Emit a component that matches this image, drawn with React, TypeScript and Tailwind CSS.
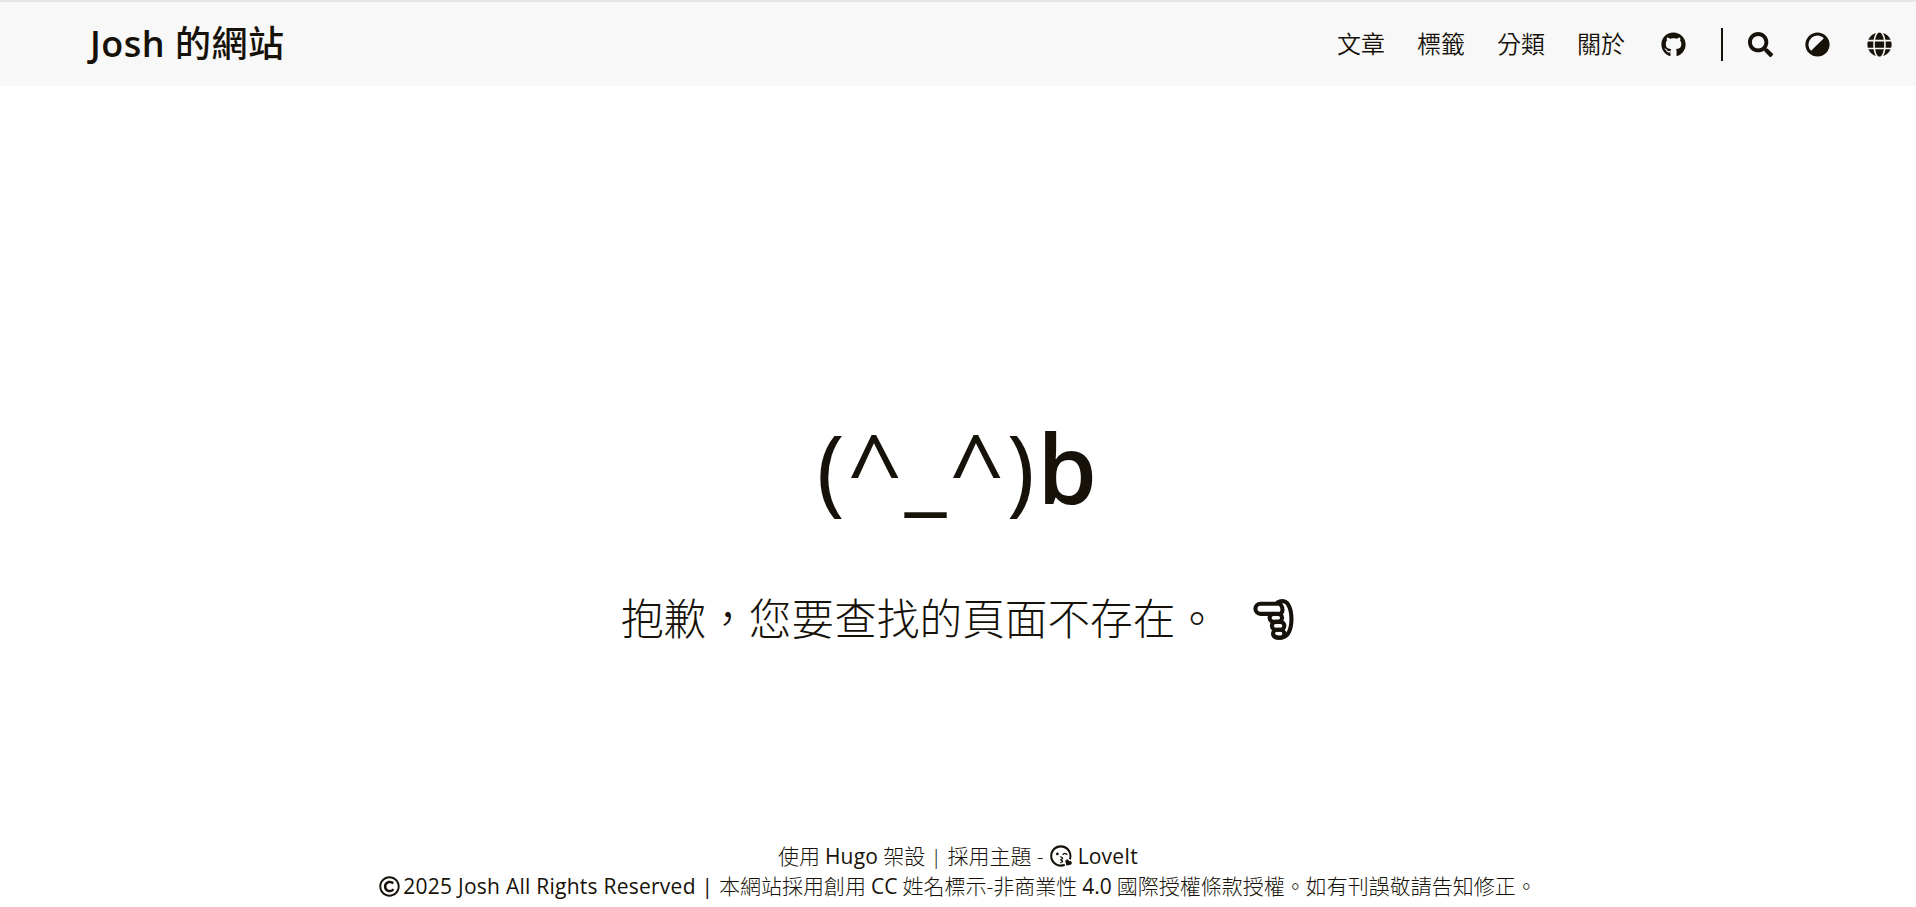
import { FaAdjust, FaGithub, FaGlobe, FaRegCopyright, FaRegKissWinkHeart, FaSearch } from "react-icons/fa";

const navItems = ["文章", "標籤", "分類", "關於"];

// pointing hand from the 404 line, no package has this one
function PointingHand() {
  return (
    <svg viewBox="6 7 36 37" className="ml-[33px] h-[42px] w-[44px]" fill="none" stroke="currentColor" strokeWidth="3.6" strokeLinecap="round" strokeLinejoin="round">
      <path d="M30 12H13a4.5 4.5 0 0 0 0 9H24" />
      <path d="M28 11C31 9 36 9 38 14C41 20 41 31 38 37C36 42 30 43 26 41" />
      <path d="M30 21C33 20 33 16 31 13" />
      <rect x="21" y="21" width="11" height="7" rx="3.5" />
      <rect x="23" y="28" width="11" height="7" rx="3.5" />
      <rect x="24" y="35" width="10" height="7" rx="3.5" />
    </svg>
  );
}

function Header() {
  return (
    <header className="flex h-[86px] shrink-0 items-center justify-between border-t-2 border-[#e5e5e5] bg-[#f8f8f8] pl-[90px] pr-6">
      <a className="text-[36px] font-medium leading-none tracking-[0.5px]">
        <span className="font-semibold">Josh</span> 的網站
      </a>
      <nav className="flex items-center text-[24px] font-[350]">
        <div className="flex gap-[32px]">
          {navItems.map((item) => (
            <a key={item}>{item}</a>
          ))}
        </div>
        <FaGithub className="ml-[36px] h-[25px] w-[25px]" />
        <span className="ml-[35px] h-[33px] w-[2px] bg-[#161209]" />
        <FaSearch className="ml-[25px] h-[25px] w-[25px]" />
        <FaAdjust className="ml-[32px] h-[25px] w-[25px] -rotate-[135deg]" />
        <FaGlobe className="ml-[37px] h-[25px] w-[25px]" />
      </nav>
    </header>
  );
}

export default function App() {
  return (
    <div className="flex h-[907px] flex-col overflow-hidden bg-white text-[#161209] [font-family:'Open_Sans','Noto_Sans_CJK_TC',sans-serif]">
      <Header />
      <main className="flex flex-1 flex-col items-center pt-[316px]">
        <h1 className="text-[96px] font-normal leading-[130px] tracking-[2.5px]">
          (^_^)<span className="font-semibold">b</span>
        </h1>
        <p className="mt-[57px] flex items-center text-[42.67px] font-light leading-[60px]">
          抱歉，您要查找的頁面不存在。
          <PointingHand />
        </p>
      </main>
      <footer className="pb-[6px] text-center text-[21px] font-light leading-[30px]">
        <div className="flex items-center justify-center">
          使用 <span className="mx-[5px] font-normal tracking-[0.2px]">Hugo</span> 架設 | 採用主題 -
          <FaRegKissWinkHeart className="mx-[6px] h-[22px] w-[22px]" />
          <span className="font-normal tracking-[0.2px]">LoveIt</span>
        </div>
        <div className="flex items-center justify-center">
          <FaRegCopyright className="mr-[3px] h-[21px] w-[21px]" />
          <span className="font-normal tracking-[0.25px]">2025 Josh All Rights Reserved |&nbsp;</span>
          本網站採用創用 <span className="mx-[5px] font-normal">CC</span> 姓名標示-非商業性 <span className="mx-[5px] font-normal">4.0</span> 國際授權條款授權。如有刊誤敬請告知修正。
        </div>
      </footer>
    </div>
  );
}
